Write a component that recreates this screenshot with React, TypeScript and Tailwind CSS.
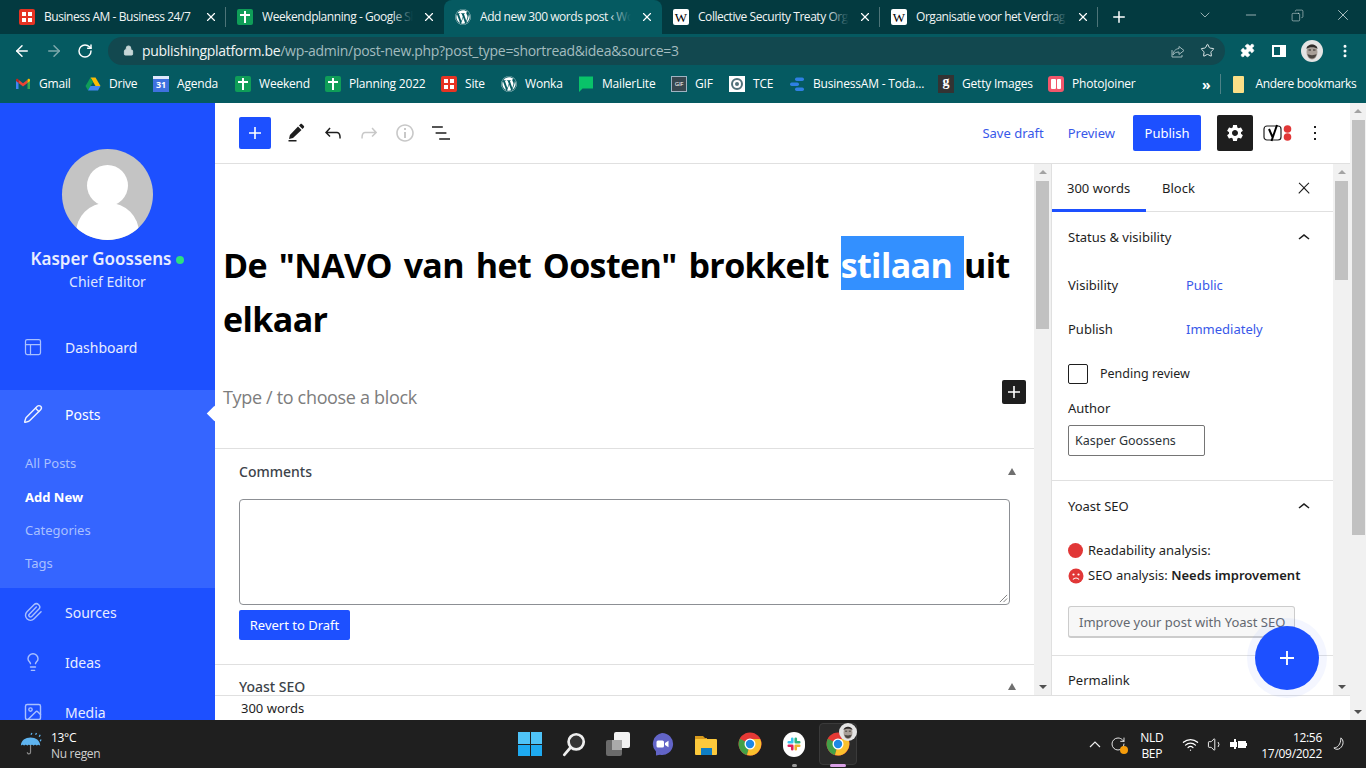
import React from 'react';
import {
  ArrowLeft, ArrowRight, ChevronDown, Copy, Image, Lightbulb, Lock, Minus, MoreVertical, PanelsTopLeft,
  Paperclip, Pencil, Plus, Puzzle, RotateCw, Star, Volume1, Wifi, X,
} from 'lucide-react';
import { FaWordpress } from 'react-icons/fa';

const Sheets = () => (
  <span className="w-4 h-4 rounded-[2px] bg-[#0f9d58] flex items-center justify-center relative shrink-0">
    <span className="absolute w-[2px] h-3 bg-white top-[2px]" />
    <span className="absolute h-[2px] w-[10px] bg-white top-[5px]" />
  </span>
);

const BusinessAm = () => (
  <span className="w-4 h-4 rounded-[2px] bg-[#e63323] grid grid-cols-2 gap-[2px] p-[3px] shrink-0">
    <span className="bg-white" />
    <span className="bg-white" />
    <span className="bg-white" />
    <span className="bg-white" />
  </span>
);

const Wp = () => <FaWordpress className="w-4 h-4 text-white shrink-0" />;

const Wiki = () => (
  <span className="w-4 h-4 rounded-[2px] bg-white text-black flex items-center justify-center text-[13px] leading-none font-['Liberation_Serif',serif] shrink-0">
    W
  </span>
);

const Gmail = () => (
  <svg viewBox="0 0 16 16" className="w-4 h-4 shrink-0">
    <path d="M1 13V4.500L3.500 6v7z" fill="#4285f4" />
    <path d="M12.500 13V6L15 4.500V13z" fill="#34a853" />
    <path d="M3.500 7V3.800L8 7.200l4.500-3.400V7L8 10.400z" fill="#ea4335" />
    <path d="M1 5V4c0-1 1.200-1.600 2-1l.5.8V7z" fill="#c5221f" />
    <path d="M15 5V4c0-1-1.200-1.600-2-1l-.5.8V7z" fill="#fbbc04" />
  </svg>
);

const Drive = () => (
  <svg viewBox="0 0 16 16" className="w-4 h-4 shrink-0">
    <path d="M5.500 1.500h5L15.500 10h-5z" fill="#fbbc04" />
    <path d="M5.500 1.500 0.500 10 3 14.500 8 6z" fill="#0f9d58" />
    <path d="M3 14.500h10L15.500 10H5.500z" fill="#4285f4" />
  </svg>
);

const Calendar = () => (
  <span className="w-4 h-4 bg-[#3f71e0] flex flex-col text-white text-[9px] leading-[11px] font-bold text-center shrink-0 border-t-[3px] border-[#dfe8fb]">
    31
  </span>
);

const Mailer = () => (
  <svg viewBox="0 0 16 18" className="w-4 h-[18px] shrink-0">
    <path d="M1 1.500h14v12H4.500L1 17z" fill="#09c269" />
  </svg>
);

const Gif = () => (
  <span className="w-4 h-4 bg-[#37474f] border border-[#9fb3c2] text-white text-[6px] leading-[14px] text-center shrink-0">
    GIF
  </span>
);

const Tce = () => (
  <span className="w-4 h-4 bg-white flex items-center justify-center shrink-0">
    <span className="w-3 h-3 rounded-full border-2 border-[#52727a] flex items-center justify-center">
      <span className="w-1 h-1 rounded-full bg-[#52727a]" />
    </span>
  </span>
);

const Bam = () => (
  <svg viewBox="0 0 16 16" className="w-4 h-4 shrink-0">
    <rect x="6" y="1.500" width="9" height="3.500" rx="1.700" fill="#2f80e4" />
    <rect x="1" y="6.500" width="9" height="3.500" rx="1.700" fill="#2f80e4" />
    <rect x="6" y="11.500" width="9" height="3.500" rx="1.700" fill="#2f80e4" />
  </svg>
);

const Getty = () => (
  <span className="w-4 h-[18px] bg-[#333] text-white text-[14px] leading-[13px] font-bold text-center font-['Liberation_Serif',serif] shrink-0">
    g
  </span>
);

const PhotoJ = () => (
  <span className="w-4 h-4 rounded-[3px] bg-[#f2566b] flex gap-[1px] p-[3px] shrink-0">
    <span className="flex-1 bg-white rounded-[1px]" />
    <span className="flex-1 bg-white rounded-[1px]" />
  </span>
);

const Face = ({ className }: { className: string }) => (
  <svg viewBox="0 0 22 22" className={className}>
    <circle cx="11" cy="11" r="11" fill="#e4e4e4" />
    <ellipse cx="11" cy="12" rx="5.500" ry="7.500" fill="#a89f98" />
    <path d="M5.500 9C5.500 3 16.500 3 16.500 9c-2-2.500-9-2.500-11 0z" fill="#2f2b29" />
    <path d="M6.500 14c1 6 8 6 9 0-2 1.500-7 1.500-9 0z" fill="#4a4541" />
    <path d="M7.500 10h2.500M12 10h2.500" stroke="#2f2b29" strokeWidth="1" />
  </svg>
);

const tabs = [
  { icon: <BusinessAm />, title: 'Business AM - Business 24/7', active: false, sep: true, fade: false },
  { icon: <Sheets />, title: 'Weekendplanning - Google Sheets', active: false, sep: false, fade: true },
  { icon: <Wp />, title: 'Add new 300 words post ‹ Wonka', active: true, sep: false, fade: true },
  { icon: <Wiki />, title: 'Collective Security Treaty Organization', active: false, sep: true, fade: true },
  { icon: <Wiki />, title: 'Organisatie voor het Verdrag inzake', active: false, sep: true, fade: true },
];

const bookmarks = [
  { icon: <Gmail />, label: 'Gmail', box: 'w-[85px] pl-[15px]' },
  { icon: <Drive />, label: 'Drive', box: 'w-[68px]' },
  { icon: <Calendar />, label: 'Agenda', box: 'w-[82px]' },
  { icon: <Sheets />, label: 'Weekend', box: 'w-[90px]' },
  { icon: <Sheets />, label: 'Planning 2022', box: 'w-[116px]' },
  { icon: <BusinessAm />, label: 'Site', box: 'w-[60px]' },
  { icon: <Wp />, label: 'Wonka', box: 'w-[77px]' },
  { icon: <Mailer />, label: 'MailerLite', box: 'w-[93px]' },
  { icon: <Gif />, label: 'GIF', box: 'w-[58px]' },
  { icon: <Tce />, label: 'TCE', box: 'w-[60px]' },
  { icon: <Bam />, label: 'BusinessAM - Toda...', box: 'w-[149px]' },
  { icon: <Getty />, label: 'Getty Images', box: 'w-[110px]' },
  { icon: <PhotoJ />, label: 'PhotoJoiner', box: 'w-[146px]' },
];

const Chrome = () => (
  <div className="text-white font-['Open_Sans',sans-serif] text-[12px]">
    {/* Tabs */}
    <div className="h-[34px] bg-[#033a40] flex items-stretch pl-[8px]">
      {tabs.map((t) => (
        <div
          key={t.title}
          className={
            t.active
              ? 'w-[218px] h-[34px] rounded-t-[8px] bg-[#055a61] flex items-center pl-[11px] pr-[8px] gap-[9px] shrink-0'
              : 'w-[218px] h-[34px] flex items-center pl-[11px] pr-[8px] gap-[9px] shrink-0 relative'
          }
        >
          {t.icon}
          <span className="flex-1 min-w-0 relative whitespace-nowrap overflow-hidden text-[12px] tracking-[-0.45px] text-[#f1f5f5]">
            {t.title}
            {t.fade && (
              <span
                className={
                  t.active
                    ? 'absolute right-0 inset-y-0 w-[22px] bg-gradient-to-l from-[#055a61] to-transparent'
                    : 'absolute right-0 inset-y-0 w-[22px] bg-gradient-to-l from-[#033a40] to-transparent'
                }
              />
            )}
          </span>
          <X className="w-[14px] h-[14px] text-white shrink-0" strokeWidth={2} />
          {t.sep && <span className="absolute right-0 top-[7px] h-[20px] w-px bg-[#4d7478]" />}
        </div>
      ))}
      <div className="w-[44px] flex items-center justify-center ml-[-1px]">
        <Plus className="w-[18px] h-[18px]" strokeWidth={2} />
      </div>
      <div className="flex-1 flex items-start justify-end text-[#dfe8e9]">
        <span className="w-[46px] h-[30px] flex items-center justify-center"><ChevronDown className="w-4 h-4" strokeWidth={1} /></span>
        <span className="w-[46px] h-[30px] flex items-center justify-center"><Minus className="w-4 h-4" strokeWidth={1} /></span>
        <span className="w-[46px] h-[30px] flex items-center justify-center"><Copy className="w-[13px] h-[13px] -scale-x-100" strokeWidth={1} /></span>
        <span className="w-[46px] h-[30px] flex items-center justify-center"><X className="w-[18px] h-[18px]" strokeWidth={1} /></span>
      </div>
    </div>

    {/* Address bar */}
    <div className="h-[33px] bg-[#055a61] flex items-center">
      <div className="w-[108px] flex items-center pl-[13px] gap-[14px] shrink-0">
        <ArrowLeft className="w-[18px] h-[18px]" strokeWidth={2} />
        <ArrowRight className="w-[18px] h-[18px] text-[#7ea9ac]" strokeWidth={2} />
        <RotateCw className="w-[16px] h-[16px]" strokeWidth={2.2} />
      </div>
      <div className="w-[1117px] h-[28px] rounded-full bg-[#12484f] flex items-center pl-[15px] pr-[10px]">
        <Lock className="w-[11px] h-[11px] text-[#c6d6d7]" fill="#c6d6d7" strokeWidth={2} />
        <span className="ml-[8px] text-[14px] tracking-[-0.3px] whitespace-nowrap text-[#f1f5f5]">
          publishingplatform.be<span className="text-[#a3bcbf]">/wp-admin/post-new.php?post_type=shortread&amp;idea&amp;source=3</span>
        </span>
        <svg viewBox="0 0 16 16" className="w-4 h-4 ml-auto mr-[14px] text-[#9db7ba]" fill="none" stroke="currentColor" strokeWidth="1">
          <path d="M9 3.500l5 4-5 4V9c-3 0-5 1-6 3 0-3 2-6 6-6.500zM2 7v7h10v-2" />
        </svg>
        <Star className="w-[15px] h-[15px] text-[#dfe8e9]" strokeWidth={1.6} />
      </div>
      <div className="flex-1 flex items-center justify-between pl-[15px] pr-[13px]">
        <Puzzle className="w-[15px] h-[15px] text-white" fill="white" strokeWidth={1} />
        <span className="w-[14px] h-[12px] bg-[#055a61] border-2 border-white border-r-[6px] ml-[3px]" />
        <Face className="w-[22px] h-[22px]" />
        <MoreVertical className="w-4 h-4" strokeWidth={2.5} />
      </div>
    </div>

    {/* Bookmarks */}
    <div className="h-[36px] pb-[2px] bg-[#055a61] flex items-center text-[12px] tracking-[-0.2px]">
      <div className="flex items-center pb-[1px]">
        {bookmarks.map((b) => (
          <div key={b.label} className={`${b.box} flex items-center gap-[8px] whitespace-nowrap shrink-0`}>
            {b.icon}
            <span>{b.label}</span>
          </div>
        ))}
      </div>
      <span className="ml-[8px] text-[14px] font-bold">»</span>
      <span className="ml-[10px] w-px h-[20px] bg-[#4d8287]" />
      <span className="ml-[12px] w-[11px] h-[17px] bg-[#fbdf87] rounded-[1px]" />
      <span className="ml-[11px] whitespace-nowrap tracking-[-0.35px]">Andere bookmarks</span>
    </div>
  </div>
);

const navIcon = 'w-5 h-5 text-[#a9c0ff]';

const Sidebar = () => (
  <aside className="w-[215px] bg-[#1d50ff] shrink-0 overflow-hidden text-white relative">
    <div className="flex flex-col items-center pt-[46px] h-[215px]">
      <div className="w-[91px] h-[91px] rounded-full bg-[#c4c4c4] relative overflow-hidden shrink-0">
        <span className="absolute left-[25px] top-[16px] w-[41px] h-[41px] rounded-full bg-white" />
        <span className="absolute left-[14px] top-[54px] w-[63px] h-[60px] rounded-full bg-white" />
      </div>
      <div className="mt-[6px] flex items-center text-[17px] leading-[26px] font-semibold text-[#e8edff]">
        Kasper Goossens
        <span className="ml-[5px] mt-[2px] w-2 h-2 rounded-full bg-[#2ee07f]" />
      </div>
      <div className="text-[14px] leading-[20px] text-[#dfe6ff]">Chief Editor</div>
    </div>

    <div className="h-[72px] pb-[14px] flex items-center pl-[23px] gap-[22px] text-[14px] text-[#e8edff]">
      <PanelsTopLeft className={navIcon} strokeWidth={1.5} />
      Dashboard
    </div>
    <div className="bg-[#3565ff] h-[198px] flex flex-col relative">
      <div className="flex items-center h-[50px] pb-[2px] pl-[23px] gap-[22px] text-[14px] shrink-0">
        <Pencil className="w-5 h-5 text-[#eef2ff]" strokeWidth={1.7} />
        Posts
      </div>
      <span className="absolute right-[-5px] top-[18px] w-[11px] h-[11px] rotate-45 bg-white" />
      <div className="flex flex-col text-[13px] pl-[25px] pt-[7px] text-[#a9c0ff]">
        <span className="h-[33px] leading-[33px]">All Posts</span>
        <span className="h-[34px] leading-[34px] font-bold text-white">Add New</span>
        <span className="h-[33px] leading-[33px]">Categories</span>
        <span className="h-[33px] leading-[33px]">Tags</span>
      </div>
    </div>
    <div className="flex flex-col text-[14px] text-[#e8edff]">
      <div className="flex items-center h-[50px] pb-[2px] pl-[23px] gap-[22px]"><Paperclip className={navIcon} strokeWidth={1.7} />Sources</div>
      <div className="flex items-center h-[50px] pb-[2px] pl-[23px] gap-[22px]"><Lightbulb className={navIcon} strokeWidth={1.7} />Ideas</div>
      <div className="flex items-center h-[50px] pb-[2px] pl-[23px] gap-[22px]"><Image className={navIcon} strokeWidth={1.7} />Media</div>
    </div>
  </aside>
);

const GB = ({ d, className }: { d: string; className: string }) => (
  <svg viewBox="0 0 24 24" className={className} fill="currentColor">
    <path d={d} />
  </svg>
);

const plusD = 'M18 11.2h-5.2V6h-1.6v5.2H6v1.6h5.2V18h1.6v-5.2H18z';
const chevUp = 'M6.500 12.400L12 8l5.500 4.400-.9 1.200L12 10l-4.500 3.600-1-1.200z';
const cogD = 'M19.140 12.940c.04-.3.06-.61.06-.94 0-.32-.02-.64-.07-.94l2.030-1.580c.18-.14.23-.41.12-.61l-1.920-3.320c-.12-.22-.37-.29-.59-.22l-2.390.96c-.5-.38-1.030-.7-1.620-.94l-.36-2.540c-.04-.24-.24-.41-.48-.41h-3.840c-.24 0-.43.17-.47.41l-.36 2.540c-.59.24-1.130.57-1.620.94l-2.390-.96c-.22-.08-.47 0-.59.22L2.740 8.870c-.12.21-.08.47.12.61l2.030 1.580c-.05.3-.09.63-.09.94s.02.64.07.94l-2.030 1.580c-.18.14-.23.41-.12.61l1.920 3.320c.12.22.37.29.59.22l2.390-.96c.5.38 1.030.7 1.620.94l.36 2.540c.05.24.24.41.48.41h3.840c.24 0 .44-.17.47-.41l.36-2.540c.59-.24 1.130-.56 1.620-.94l2.390.96c.22.08.47 0 .59-.22l1.920-3.320c.12-.22.07-.47-.12-.61l-2.010-1.580zM12 15.600c-1.980 0-3.600-1.620-3.600-3.600s1.620-3.600 3.600-3.600 3.600 1.620 3.600 3.600-1.620 3.600-3.600 3.600z';

const TopBar = () => (
  <div className="h-[61px] bg-white border-b border-[#e0e0e0] flex items-center pl-[24px] shrink-0">
    <button className="w-8 h-8 rounded-[2px] bg-[#1d50ff] text-white flex items-center justify-center">
      <GB d={plusD} className="w-6 h-6" />
    </button>
    <div className="flex items-center ml-[14px] gap-[12px]">
      <GB d="M3.500 19h8v1.500h-8zM13 5.500l3.500 3.500L8 17l-4 1 .9-4zM14 4.500l1.500-1.500c.4-.4 1-.4 1.400 0l2 2c.4.4.4 1 0 1.400L17.500 8z" className="w-6 h-6 text-[#1e1e1e]" />
      <GB d="M18.300 11.700c-.6-.6-1.400-.9-2.300-.9H6.700l2.900-3.300-1.100-1-4.500 5L8.500 16l1-1-2.700-2.700H16c.5 0 .9.2 1.300.5 1 1 1 3.400 1 4.500v.3h1.500v-.2c0-1.500 0-4.300-1.500-5.700z" className="w-6 h-6 text-[#1e1e1e]" />
      <GB d="M15.600 6.500l-1.100 1 2.900 3.300H8c-.9 0-1.700.3-2.300.9-1.400 1.500-1.400 4.200-1.400 5.600v.2h1.500v-.3c0-1.100 0-3.500 1-4.500.3-.3.700-.5 1.300-.5h9.200L14.500 15l1.100 1.100 4.600-4.600-4.600-5z" className="w-6 h-6 text-[#c8c8c8]" />
      <GB d="M12 3.200c-4.800 0-8.800 3.900-8.800 8.800 0 4.800 3.900 8.800 8.800 8.800 4.800 0 8.800-3.900 8.800-8.800 0-4.800-4-8.800-8.800-8.800zm0 16c-4 0-7.200-3.300-7.200-7.200C4.800 8 8 4.800 12 4.800s7.200 3.200 7.200 7.200c0 4-3.200 7.200-7.200 7.200zM11 17h2v-6h-2v6zm0-8h2V7h-2v2z" className="w-6 h-6 text-[#c8c8c8]" />
      <GB d="M13.800 5.200H3v1.500h10.800V5.200zm-3.600 12v1.500H21v-1.500H10.200zm7.200-6H6.600v1.500h10.800v-1.500z" className="w-6 h-6 text-[#1e1e1e]" />
    </div>
    <div className="ml-auto flex items-center pr-[23px] text-[13px]">
      <span className="text-[#3858e9] mr-[24px] pt-[2px]">Save draft</span>
      <span className="text-[#3858e9] mr-[18px] pt-[2px]">Preview</span>
      <button className="w-[68px] h-9 pt-[2px] rounded-[2px] bg-[#1d50ff] text-white">Publish</button>
      <button className="w-9 h-9 ml-4 rounded-[2px] bg-[#1e1e1e] text-white flex items-center justify-center">
        <GB d={cogD} className="w-5 h-5" />
      </button>
      <svg viewBox="0 0 30 20" className="w-[30px] h-5 ml-[10px]">
        <rect x="1" y="3" width="17" height="14" rx="3" fill="none" stroke="#1e1e1e" strokeWidth="1.200" />
        <path d="M6 6l3.500 8M14 2l-5.500 16" fill="none" stroke="#000" strokeWidth="2" />
        <circle cx="24.500" cy="6" r="3.800" fill="#e13737" />
        <circle cx="24.500" cy="14" r="3.800" fill="#e13737" />
      </svg>
      <GB d="M13 19h-2v-2h2v2zm0-6h-2v-2h2v2zm0-6h-2V5h2v2z" className="w-6 h-6 ml-[10px] text-[#1e1e1e]" />
    </div>
  </div>
);

const Track = ({ spacer, thumb, box }: { spacer: string; thumb: string; box: string }) => (
  <div className={`${box} bg-[#f1f1f1] flex flex-col items-center shrink-0 relative`}>
    <span className="mt-[6px] w-0 h-0 border-x-[4px] border-x-transparent border-b-[4px] border-b-[#a3a3a3]" />
    <div className={spacer} />
    <div className={`${thumb} w-[13px] bg-[#c1c1c1]`} />
    <span className="absolute bottom-[6px] w-0 h-0 border-x-[4px] border-x-transparent border-t-[4px] border-t-[#505050]" />
  </div>
);

const MetaCaret = () => (
  <span className="flex mr-[-6px]">
    <span className="w-0 h-0 border-x-[4.500px] border-x-transparent border-b-[7px] border-b-[#6f6f6f]" />
  </span>
);

const EditorPane = () => (
  <div className="flex-1 min-w-0 flex flex-col overflow-hidden bg-white">
    <div className="h-[284px] shrink-0 pl-[8px] pr-[16px] pt-[72px] relative">
      <h1 className="text-[34px] leading-[54px] font-bold text-black font-['Open_Sans',sans-serif] tracking-[-0.6px] [word-spacing:3.4px]">
        De "NAVO van het Oosten" brokkelt <span className="inline-block bg-[#3390ff] text-white whitespace-pre h-[54px] leading-[58px]">stilaan </span>uit elkaar
      </h1>
      <p className="mt-[38px] text-[18px] leading-[26px] text-[#7d7d7d] font-['Open_Sans',sans-serif] tracking-[-0.33px]">Type / to choose a block</p>
      <span className="absolute left-[787px] top-[216px] w-6 h-6 rounded-[2px] bg-[#1e1e1e] text-white flex items-center justify-center">
        <GB d={plusD} className="w-6 h-6" />
      </span>
    </div>
    <div className="border-t border-[#e0e0e0] h-[216px] shrink-0 px-[24px]">
      <div className="flex items-center justify-between h-[44px] pt-[1px] text-[#3c434a] text-[14px] font-medium">
        Comments
        <MetaCaret />
      </div>
      <div className="h-[106px] mt-[6px] border border-[#8c8f94] rounded-[4px] relative">
        <svg viewBox="0 0 10 10" className="absolute right-[1px] bottom-[1px] w-[9px] h-[9px] text-[#777]" fill="none" stroke="currentColor" strokeWidth="1">
          <path d="M1 9l8-8M5 9l4-4" />
        </svg>
      </div>
      <button className="mt-[5px] h-[30px] w-[111px] pt-[2px] rounded-[2px] bg-[#1d50ff] text-white text-[13px]">Revert to Draft</button>
    </div>
    <div className="border-t border-[#e0e0e0] px-[24px] pt-[11px] flex items-center justify-between text-[#3c434a] text-[14px] font-medium">
      Yoast SEO
      <MetaCaret />
    </div>
  </div>
);

const SettingsPane = () => (
  <div className="w-[282px] border-l border-[#e0e0e0] bg-white shrink-0 overflow-hidden relative text-[13px] text-[#1e1e1e]">
    <div className="h-[48px] border-b border-[#e0e0e0] flex items-center relative">
      <div className="w-[94px] h-[48px] border-b-[3px] border-[#1d50ff] pl-[15px] leading-[48px] shrink-0">300 words</div>
      <div className="ml-[16px] pt-[2px]">Block</div>
      <GB d="M13 11.800l6.100-6.300-1-1-6.100 6.200-6.100-6.200-1 1 6.100 6.300-6.500 6.700 1 1 6.500-6.600 6.500 6.600 1-1z" className="w-[18px] h-[18px] ml-auto mr-[20px] text-[#1e1e1e]" />
    </div>
    <div className="h-[269px] border-b border-[#e0e0e0] pl-[16px] pr-[16px]">
      <div className="flex items-center justify-between h-[52px]">
        Status &amp; visibility
        <GB d={chevUp} className="w-6 h-6 mr-[1px]" />
      </div>
      <div className="flex items-center h-[44px]"><span className="w-[118px]">Visibility</span><span className="text-[#3858e9]">Public</span></div>
      <div className="flex items-center h-[44px]"><span className="w-[118px]">Publish</span><span className="text-[#3858e9]">Immediately</span></div>
      <div className="flex items-center h-[44px] gap-[12px]">
        <span className="w-5 h-5 border border-[#1e1e1e] rounded-[2px]" />
        <span className="text-[12.500px]">Pending review</span>
      </div>
      <div className="h-[20px] leading-[20px] mt-[2px]">Author</div>
      <div className="mt-[7px] w-[137px] h-[31px] border border-[#757575] rounded-[2px] pl-[6px] leading-[29px] text-[12.500px] text-[#2c3338]">Kasper Goossens</div>
    </div>
    <div className="h-[175px] border-b border-[#e0e0e0] pl-[16px] pr-[16px]">
      <div className="flex items-center justify-between h-[52px]">
        Yoast SEO
        <GB d={chevUp} className="w-6 h-6 mr-[1px]" />
      </div>
      <div className="flex items-center h-[25px] mt-[5px] gap-[5px]">
        <span className="w-[15px] h-[15px] rounded-full bg-[#e13737]" />
        Readability analysis:
      </div>
      <div className="flex items-center h-[26px] gap-[4px] whitespace-nowrap">
        <svg viewBox="0 0 16 16" className="w-4 h-4">
          <circle cx="8" cy="8" r="7.500" fill="#e13737" />
          <circle cx="5.500" cy="6.500" r="1.100" fill="#fff" />
          <circle cx="10.500" cy="6.500" r="1.100" fill="#fff" />
          <path d="M5 11.500c1.500-2 4.500-2 6 0" stroke="#fff" strokeWidth="1.200" fill="none" />
        </svg>
        <span>SEO analysis: <b className="font-semibold">Needs improvement</b></span>
      </div>
      <div className="mt-[17px] w-[227px] h-[32px] rounded-[3px] border border-[#ccc] border-b-[2px] bg-[#f7f7f7] pl-[10px] leading-[31px] text-[#646970] whitespace-nowrap">
        Improve your post with Yoast SEO
      </div>
    </div>
    <div className="pl-[16px] pt-[15px]">Permalink</div>
  </div>
);

const TaskbarIcon = ({ children }: { children: React.ReactNode }) => (
  <div className="w-[44px] h-[48px] flex items-center justify-center relative">{children}</div>
);

const ChromeLogo = () => (
  <svg viewBox="0 0 24 24" className="w-6 h-6">
    <circle cx="12" cy="12" r="11.500" fill="#e53935" />
    <path d="M12 12L1.900 6.700A11.500 11.500 0 0 0 9 23.100z" fill="#43a047" />
    <path d="M12 7h10.100A11.500 11.500 0 0 1 9 23.100L12 12z" fill="#fbc02d" />
    <circle cx="12" cy="12" r="5.500" fill="#fff" />
    <circle cx="12" cy="12" r="4.200" fill="#1e88e5" />
  </svg>
);

const Taskbar = () => (
  <div className="h-[48px] bg-[#1f1f1f] flex items-center text-white font-['Open_Sans',sans-serif] text-[12px] tracking-[-0.3px] shrink-0">
    <div className="w-[508px] shrink-0 flex items-center pl-[20px] gap-[9px]">
      <svg viewBox="0 0 24 26" className="w-[22px] h-6">
        <path d="M1 15C1 9 6 6 11.500 6S22 9 22 15c-1.500-1.500-3-1.500-3.500 0-1-1.500-3-1.500-3.500 0-1-1.500-3-1.500-3.500 0-1-1.500-3-1.500-3.500 0-1-1.500-3-1.500-3.500 0-1-1.500-2.500-1.500-3.500 0z" fill="#5eb4f0" />
        <path d="M11.500 14v8c0 2.500-3.500 2.500-3.500 0" fill="none" stroke="#8a8a8a" strokeWidth="1.300" />
        <path d="M13 1l-1 2M18 1l-1 2M22 3l-1 2M23 8l-1 2" stroke="#5eb4f0" strokeWidth="1.400" />
      </svg>
      <div className="flex flex-col leading-[16px] pt-[3px]">
        <span>13°C</span>
        <span className="text-[#d0d0d0]">Nu regen</span>
      </div>
    </div>
    <div className="flex items-center">
      <TaskbarIcon>
        <span className="grid grid-cols-2 gap-px w-6 h-6">
          <span className="bg-[#4fc3f7]" /><span className="bg-[#4fc3f7]" />
          <span className="bg-[#1eaaf1]" /><span className="bg-[#1eaaf1]" />
        </span>
      </TaskbarIcon>
      <TaskbarIcon>
        <svg viewBox="0 0 24 24" className="w-[26px] h-[26px]" fill="none" stroke="#eee" strokeWidth="2.500">
          <circle cx="14" cy="10" r="7" fill="#333" />
          <path d="M9 15l-6 7" strokeLinecap="round" />
        </svg>
      </TaskbarIcon>
      <TaskbarIcon>
        <span className="relative w-6 h-6">
          <span className="absolute right-0 top-0 w-[16px] h-[16px] rounded-[2px] bg-[#f2f2f2]" />
          <span className="absolute left-0 bottom-0 w-[16px] h-[16px] rounded-[2px] bg-[#6b6b6b]" />
          <span className="absolute left-[6px] top-[8px] w-[10px] h-[10px] bg-[#aaa]" />
        </span>
      </TaskbarIcon>
      <TaskbarIcon>
        <svg viewBox="0 0 24 24" className="w-6 h-6">
          <path d="M12 1a11 11 0 1 1-2 21.800L6 23.500v-4A11 11 0 0 1 12 1z" fill="#6264c7" />
          <rect x="6.500" y="8.500" width="7.500" height="7" rx="1.500" fill="#fff" />
          <path d="M15 11l3.500-2.200v6.400L15 13z" fill="#fff" />
        </svg>
      </TaskbarIcon>
      <TaskbarIcon>
        <svg viewBox="0 0 24 24" className="w-6 h-6">
          <path d="M1 4h8l2 2h2v4H1z" fill="#d89a1c" />
          <rect x="1" y="7" width="22" height="16" rx="1" fill="#fcc93c" />
          <rect x="7" y="16" width="11" height="7" fill="#0f7ec4" />
        </svg>
      </TaskbarIcon>
      <TaskbarIcon><ChromeLogo /></TaskbarIcon>
      <TaskbarIcon>
        <span className="w-[22px] h-[25px] rounded-full bg-white flex items-center justify-center">
          <svg viewBox="0 0 16 16" className="w-[14px] h-[14px]" fill="none" strokeWidth="3" strokeLinecap="round">
            <path d="M6 2v4M2 6h4" stroke="#36c5f0" />
            <path d="M14 6h-4M10 2v4" stroke="#2eb67d" />
            <path d="M10 14v-4M14 10h-4" stroke="#ecb22e" />
            <path d="M2 10h4M6 14v-4" stroke="#e01e5a" />
          </svg>
        </span>
        <span className="absolute bottom-[1px] w-[5px] h-[3px] rounded-full bg-[#9a9a9a]" />
      </TaskbarIcon>
      <TaskbarIcon>
        <span className="absolute inset-x-[3px] inset-y-[3px] rounded-[4px] bg-[#2a2a2a] border border-[#3a3a3a]" />
        <span className="relative"><ChromeLogo /></span>
        <Face className="absolute right-[3px] top-[3px] w-[18px] h-[18px]" />
        <span className="absolute bottom-[1px] w-[16px] h-[3px] rounded-full bg-[#d9a0e6]" />
      </TaskbarIcon>
    </div>
    <div className="flex-1 flex items-center justify-end pr-[19px]">
      <svg viewBox="0 0 12 8" className="w-[12px] h-2 mr-[9px]" fill="none" stroke="#eee" strokeWidth="1.200"><path d="M1 7l5-5 5 5" /></svg>
      <span className="relative mr-[12px]">
        <RotateCw className="w-4 h-4 text-white" strokeWidth={1.300} />
        <span className="absolute right-[-2px] bottom-[-2px] w-2 h-2 rounded-full bg-[#f59c0b]" />
      </span>
      <div className="flex flex-col items-center leading-[16px] pt-[3px] mr-[17px] w-[27px]"><span>NLD</span><span>BEP</span></div>
      <Wifi className="w-[17px] h-[17px] mr-[8px]" strokeWidth={1.800} />
      <Volume1 className="w-[17px] h-[17px] mr-[6px]" strokeWidth={1.300} />
      <svg viewBox="0 0 18 12" className="w-[18px] h-3 mr-[13px]" fill="#fff"><path d="M0 4h4V1h2v3h1v5H6v2H4V9H0zM8 3h8v2h1v3h-1v2H8z" /></svg>
      <div className="flex flex-col items-end leading-[16px] pt-[3px] mr-[11px]"><span>12:56</span><span>17/09/2022</span></div>
      <svg viewBox="0 0 16 16" className="w-[14px] h-[14px]" fill="none" stroke="#eee" strokeWidth="1.100"><path d="M9 1c3 2 4 8-1 12-2 1.500-5 1.500-7-.5 4 0 8-4 8-11.500z" /></svg>
    </div>
  </div>
);

export default function App() {
  return (
    <div className="w-[1366px] h-[768px] flex flex-col overflow-hidden relative font-['Noto_Sans',sans-serif]">
      <Chrome />
      <div className="flex-1 min-h-0 flex">
        <Sidebar />
        <div className="flex-1 min-w-0 flex flex-col">
          <TopBar />
          <div className="flex-1 min-h-0 flex">
            <EditorPane />
            <Track box="w-[17px]" spacer="h-[7px]" thumb="h-[148px]" />
            <SettingsPane />
            <Track box="w-[17px]" spacer="h-[7px]" thumb="h-[99px]" />
          </div>
          <div className="h-[25px] bg-white border-t border-[#e0e0e0] pl-[26px] text-[13px] leading-[24px] text-[#1e1e1e] shrink-0">300 words</div>
        </div>
        <Track box="w-[16px]" spacer="h-[7px]" thumb="h-[415px]" />
      </div>
      <Taskbar />
      <button className="absolute left-[1255px] top-[626px] w-16 h-16 rounded-full bg-[#1d50ff] text-white flex items-center justify-center ring-8 ring-[#1d50ff]/5">
        <GB d={plusD} className="w-7 h-7" />
      </button>
    </div>
  );
}
